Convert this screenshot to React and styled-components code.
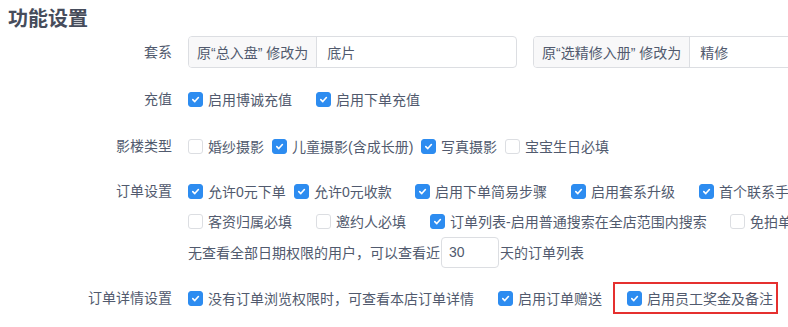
import React from "react";
import styled, { createGlobalStyle } from "styled-components";

const GlobalStyle = createGlobalStyle`
  html, body {
    margin: 0;
    padding: 0;
    background: #fff;
    overflow: hidden;
  }
  body {
    font-family: "Liberation Sans", "Noto Sans CJK SC", sans-serif;
    font-size: 14px;
    color: #515a6e;
  }
`;

const Page = styled.div`
  width: 788px;
  height: 327px;
  overflow: hidden;
  padding: 7px 0 0 8px;
  box-sizing: border-box;
`;

const Title = styled.h2`
  margin: 0 0 5px 0;
  font-size: 20px;
  line-height: 24px;
  font-weight: 700;
  color: #464c5b;
`;

const FormItem = styled.div`
  display: flex;
  align-items: flex-start;
  margin-bottom: ${(p) => p.$mb ?? 15}px;
  margin-left: -8px;
`;

const Label = styled.div`
  width: 172px;
  flex: none;
  text-align: right;
  line-height: 32px;
  white-space: nowrap;
`;

const Content = styled.div`
  margin-left: 16px;
  display: flex;
  flex-direction: column;
`;

const Line = styled.div`
  display: flex;
  align-items: center;
  height: ${(p) => p.$h ?? 32}px;
  white-space: nowrap;
`;

const InputGroup = styled.div`
  display: flex;
  width: ${(p) => p.$w}px;
  height: 32px;
  border: 1px solid #dcdee2;
  border-radius: 4px;
  box-sizing: border-box;
  margin-right: 16px;
  flex: none;
  overflow: hidden;
`;

const Addon = styled.span`
  display: flex;
  align-items: center;
  padding: 0 8px;
  background: #f8f8f9;
  border-right: 1px solid #dcdee2;
  white-space: nowrap;
  color: #515a6e;
`;

const GroupValue = styled.span`
  display: flex;
  align-items: center;
  padding: 0 10px;
  color: #515a6e;
`;

const CheckItem = styled.label`
  display: inline-flex;
  align-items: center;
  width: ${(p) => (p.$w ? `${p.$w}px` : "auto")};
  flex: none;
  white-space: nowrap;
`;

const Box = styled.span`
  width: 15px;
  height: 15px;
  box-sizing: border-box;
  border-radius: 3px;
  margin-right: 5px;
  flex: none;
  display: flex;
  align-items: center;
  justify-content: center;
  background: ${(p) => (p.$checked ? "#2d8cf0" : "#fff")};
  border: 1px solid ${(p) => (p.$checked ? "#2d8cf0" : "#dcdee2")};
`;

const SmallInput = styled.span`
  display: inline-flex;
  align-items: center;
  width: 58px;
  height: 31px;
  box-sizing: border-box;
  border: 1px solid #dcdee2;
  border-radius: 4px;
  padding-left: 7px;
  margin: 0 1px;
`;

const Highlight = styled.div`
  display: flex;
  align-items: center;
  height: 32px;
  box-sizing: border-box;
  border: 2px solid #e5302f;
  padding: 0 3px 0 12px;
`;

const Check = ({ checked, w, children }) => (
  <CheckItem $w={w}>
    <Box $checked={checked}>
      {checked && (
        <svg width="9" height="9" viewBox="0 0 10 10">
          <path
            d="M2 5.2 L4.2 7.3 L8.2 2.8"
            fill="none"
            stroke="#fff"
            strokeWidth="1.8"
            strokeLinecap="round"
            strokeLinejoin="round"
          />
        </svg>
      )}
    </Box>
    {children}
  </CheckItem>
);

const App = () => {
  return (
    <>
      <GlobalStyle />
      <Page>
        <Title>功能设置</Title>

        <FormItem>
          <Label>套系</Label>
          <Content>
            <Line>
              <InputGroup $w={329}>
                <Addon>原“总入盘” 修改为</Addon>
                <GroupValue>底片</GroupValue>
              </InputGroup>
              <InputGroup $w={330}>
                <Addon>原“选精修入册” 修改为</Addon>
                <GroupValue>精修</GroupValue>
              </InputGroup>
            </Line>
          </Content>
        </FormItem>

        <FormItem>
          <Label>充值</Label>
          <Content>
            <Line>
              <Check checked w={128}>启用博诚充值</Check>
              <Check checked>启用下单充值</Check>
            </Line>
          </Content>
        </FormItem>

        <FormItem $mb={14}>
          <Label>影楼类型</Label>
          <Content>
            <Line>
              <Check w={84}>婚纱摄影</Check>
              <Check checked w={149}>儿童摄影(含成长册)</Check>
              <Check checked w={84}>写真摄影</Check>
              <Check>宝宝生日必填</Check>
            </Line>
          </Content>
        </FormItem>

        <FormItem $mb={14}>
          <Label style={{ lineHeight: "30px" }}>订单设置</Label>
          <Content>
            <Line $h={30}>
              <Check checked w={106}>允许0元下单</Check>
              <Check checked w={121}>允许0元收款</Check>
              <Check checked w={156}>启用下单简易步骤</Check>
              <Check checked w={128}>启用套系升级</Check>
              <Check checked>首个联系手机号必填</Check>
            </Line>
            <Line $h={30}>
              <Check w={128}>客资归属必填</Check>
              <Check w={114}>邀约人必填</Check>
              <Check checked w={300}>订单列表-启用普通搜索在全店范围内搜索</Check>
              <Check>免拍单审核</Check>
            </Line>
            <Line>
              无查看全部日期权限的用户，可以查看近
              <SmallInput>30</SmallInput>
              天的订单列表
            </Line>
          </Content>
        </FormItem>

        <FormItem>
          <Label>订单详情设置</Label>
          <Content>
            <Line>
              <Check checked w={310}>没有订单浏览权限时，可查看本店订单详情</Check>
              <Check checked w={115}>启用订单赠送</Check>
              <Highlight>
                <Check checked>启用员工奖金及备注</Check>
              </Highlight>
            </Line>
          </Content>
        </FormItem>
      </Page>
    </>
  );
};

export default App;
